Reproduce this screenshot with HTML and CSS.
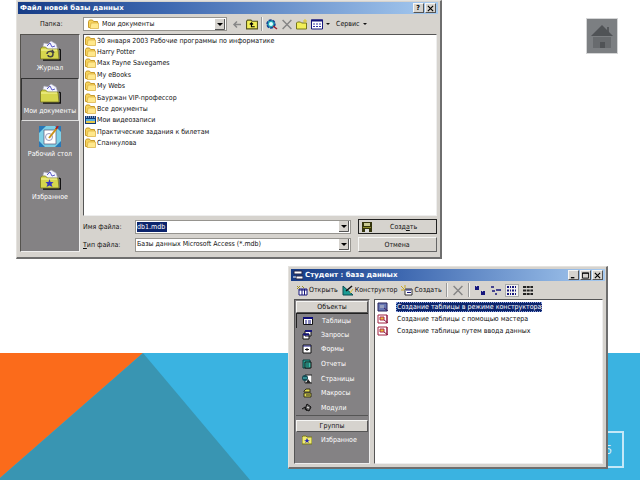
FILE: index.html
```
<!DOCTYPE html>
<html lang="ru">
<head>
<meta charset="utf-8">
<title>Файл новой базы данных</title>
<link rel="stylesheet" href="styles.css">
</head>
<body>
<svg class="defs" aria-hidden="true">
  <symbol id="folder" viewBox="0 0 11 10">
    <path d="M.5 8.500V2.500L1.500 1h3l1 1.500h4v6z" fill="#f7d45c" stroke="#c79a2c"/>
    <path d="M2 9.500 3 4h7.500v5.500z" fill="#ffe88c" stroke="#d9ac3c" stroke-width=".7"/>
  </symbol>
  <symbol id="bigfolder" viewBox="0 0 22 21">
    <path d="M3 9 5 3l4 1 3-3 5 3 2 6z" fill="#f4f5ff" stroke="#aab" stroke-width=".6"/>
    <path d="M8 6l3-3 2 4 3-1" fill="none" stroke="#5a5ac8"/>
    <path d="M20 9l1.500 1v10H4" fill="none" stroke="#111" stroke-width="1.500"/>
    <path d="M1.500 19V8.500l2-1.500h3l2 2h10.500l1 10z" fill="#d6d64e" stroke="#77771c" stroke-width=".8"/>
    <path d="M2 10h16" stroke="#f8f8a0"/>
  </symbol>
  <symbol id="form" viewBox="0 0 10 10">
    <path d="M.5 1.500h9v7h-9z" fill="#fff" stroke="#111"/>
    <path d="M0 1h10v2H0z" fill="#10107c"/>
    <path d="M2 5h2M5 5h3M2 7h2M5 7h3" stroke="#10107c"/>
  </symbol>
  <symbol id="wizard" viewBox="0 0 12 10">
    <path d="M1 1h9v8H1z" fill="#fff" stroke="#a02040"/>
    <path d="M3 3h4v3H3z" fill="#e6c23c" stroke="#b02848"/>
    <path d="M7 6l4 3M10 1v8" stroke="#8c1840"/>
  </symbol>
  <symbol id="cross" viewBox="0 0 10 10">
    <path d="M1 1l8 8M9 1 1 9" stroke="#858585" stroke-width="1.300"/>
  </symbol>
</svg>

<main class="slide">
  <svg class="band" viewBox="0 0 640 127" preserveAspectRatio="none" aria-hidden="true">
    <path d="M0 0h640v127H0z" fill="#3ab3e1"/>
    <path d="M0 0h143L0 125z" fill="#fb6b1b"/>
    <path d="M143 0 250 127H0v-2z" fill="#3995b2"/>
  </svg>
  <div class="page-number">5</div>
  <a class="home" href="#" aria-label="Домой">
    <svg viewBox="0 0 30 34"><path d="M20 8h2v6h-2z" fill="#56595c"/><path d="M15 6 4 17h22z" fill="#505356"/><path d="M6 18h18v11H6z" fill="#686b6e"/><path d="M13 23h5v6h-5z" fill="#505356"/></svg>
  </a>

  <form class="window file-dialog">
    <header class="titlebar">
      <h1>Файл новой базы данных</h1>
      <button type="button" class="caption" aria-label="Справка">?</button>
      <button type="button" class="caption" aria-label="Закрыть"><svg viewBox="0 0 8 8"><path d="M1 1l6 6M7 1 1 7" stroke="#000" stroke-width="1.300"/></svg></button>
    </header>

    <div class="lookup">
      <label for="place">Папка:</label>
      <div class="combo">
        <svg class="file-icon"><use href="#folder"/></svg>
        <select id="place"><option>Мои документы</option></select>
      </div>
      <div class="tools">
        <button type="button" aria-label="Назад"><svg viewBox="0 0 12 11"><path d="M10 5.500H3M6 2.500l-3 3 3 3" fill="none" stroke="#888" stroke-width="1.500"/></svg></button>
        <button type="button" aria-label="Вверх"><svg viewBox="0 0 11 10"><path d="M.5 9V2l1-1h3l1 1h5v7z" fill="#f2ef58" stroke="#55551a"/><path d="M8 7H5V3.500M3.500 5 5 3.500 6.500 5" fill="none" stroke="#000"/></svg></button>
        <span class="divider"></span>
        <button type="button" aria-label="Поиск в Интернете"><svg viewBox="0 0 12 11"><circle cx="5" cy="5" r="4" fill="#24a8b8" stroke="#173e92" stroke-width="1.500" stroke-dasharray="3 1"/><circle cx="5" cy="5" r="2" fill="#dff"/><path d="M7 7l4 3" stroke="#a02030" stroke-width="1.500"/></svg></button>
        <button type="button" aria-label="Удалить"><svg><use href="#cross"/></svg></button>
        <button type="button" aria-label="Создать папку"><svg viewBox="0 0 12 11"><path d="M.5 10V4l1-1h3l1 1h5v6z" fill="#f2ef58" stroke="#77771c"/><path d="M9 0v4M7 2h4" stroke="#dcc728"/></svg></button>
        <button type="button" class="with-arrow" aria-label="Вид"><svg viewBox="0 0 12 10"><path d="M.5.500h11v9H.500z" fill="#fff" stroke="#16167c"/><path d="M0 1h12" stroke="#16167c" stroke-width="2"/><path d="M2 4.500h8M2 7h8" stroke="#3434a4" stroke-dasharray="2 1"/></svg></button>
        <button type="button" class="with-arrow service">Сервис</button>
      </div>
    </div>

    <div class="dialog-body">
      <nav class="places">
        <button type="button"><svg><use href="#bigfolder"/><path d="M8 14c0-3 6-4 6 0s-5 3-5 1M13 10l2 3" fill="none" stroke="#444" stroke-width="1.500"/></svg>Журнал</button>
        <button type="button" class="current"><svg><use href="#bigfolder"/></svg>Мои документы</button>
        <button type="button"><svg viewBox="0 0 22 21"><path d="M0 0h22v21H0z" fill="#2878b8"/><path d="M0 7 7 0h9l6 6v9l-6 6H6l-6-6z" fill="#7fd0e6"/><path d="M5 4h12v14H5z" fill="#fff" stroke="#557" stroke-width=".7"/><circle cx="10" cy="11" r="3.500" fill="none" stroke="#99b"/><path d="M10 12l8-10" stroke="#c89018" stroke-width="2"/><path d="M17 3l2-3" stroke="#b02020" stroke-width="2"/></svg>Рабочий стол</button>
        <button type="button"><svg><use href="#bigfolder"/><path d="M10.500 10l1 3h3l-2 2 1 3-3-1.500-3 1.500 1-3-2-2h3z" fill="#3838bc"/></svg>Избранное</button>
      </nav>

      <div class="dialog-main">
        <ul class="files">
          <li><svg class="file-icon"><use href="#folder"/></svg>30 января 2003 Рабочие программы по информатике</li>
          <li><svg class="file-icon"><use href="#folder"/></svg>Harry Potter</li>
          <li><svg class="file-icon"><use href="#folder"/></svg>Max Payne Savegames</li>
          <li><svg class="file-icon"><use href="#folder"/></svg>My eBooks</li>
          <li><svg class="file-icon"><use href="#folder"/></svg>My Webs</li>
          <li><svg class="file-icon"><use href="#folder"/></svg>Бауржан VIP-профессор</li>
          <li><svg class="file-icon"><use href="#folder"/></svg>Все документы</li>
          <li><svg class="file-icon" viewBox="0 0 11 10"><path d="M0 1h11v8H0z" fill="#123a78"/><path d="M1 2h9" stroke="#fff" stroke-dasharray="1 1"/><path d="M1 4h9v2H1z" fill="#58aee0"/><path d="M1 6h9v2H1z" fill="#e5c84c"/></svg>Мои видеозаписи</li>
          <li><svg class="file-icon"><use href="#folder"/></svg>Практические задания к билетам</li>
          <li><svg class="file-icon"><use href="#folder"/></svg>Спанкулова</li>
        </ul>
        <div class="fields">
          <label for="fname">Имя файла:</label>
          <div class="combo">
            <input id="fname" type="text" value="db1.mdb">
            <button type="button" class="drop" aria-label="Список имён"></button>
          </div>
          <button type="submit" class="push default"><svg viewBox="0 0 10 10"><path d="M0 0h10v10H0z" fill="#34340c"/><path d="M2 1h6v3H2z" fill="#c8c890"/><path d="M1 5h8v1H1z" fill="#8c8c28"/><path d="M3 7h4v3H3z" fill="#ddd"/></svg><span>Созд<u>а</u>ть</span></button>
          <label for="ftype"><u>Т</u>ип файла:</label>
          <div class="combo">
            <select id="ftype"><option>Базы данных Microsoft Access (*.mdb)</option></select>
          </div>
          <button type="button" class="push"><span>Отмена</span></button>
        </div>
      </div>
    </div>
  </form>

  <section class="window database">
    <header class="titlebar">
      <svg class="title-icon" viewBox="0 0 10 10"><path d="M1 1h8v3H1zM3 6h7v3H3z" fill="#fff" stroke="#224"/><path d="M0 7h3" stroke="#fff"/></svg>
      <h2>Студент : база данных</h2>
      <button type="button" class="caption" aria-label="Свернуть"><svg viewBox="0 0 8 8"><path d="M1 6.500h4" stroke="#000" stroke-width="1.500"/></svg></button>
      <button type="button" class="caption" aria-label="Развернуть"><svg viewBox="0 0 8 8"><path d="M.5 1h7v6h-7z" fill="none" stroke="#000"/><path d="M0 1.500h8" stroke="#000"/></svg></button>
      <button type="button" class="caption" aria-label="Закрыть"><svg viewBox="0 0 8 8"><path d="M1 1l6 6M7 1 1 7" stroke="#000" stroke-width="1.300"/></svg></button>
    </header>
    <div class="db-tools">
      <button type="button"><svg viewBox="0 0 12 11"><path d="M3 4h8v6H3z" fill="#fff" stroke="#16167c"/><path d="M3 5h8M6 4v6M8.500 4v6" stroke="#16167c"/><path d="M1 1l3 3M1 4l3-3M6 1l2 2" stroke="#9a8a20"/></svg>Открыть</button>
      <button type="button"><svg viewBox="0 0 12 11"><path d="M1 1v9h10z" fill="#1c9c94" stroke="#0a4c50"/><path d="M4 6l6-5" stroke="#111" stroke-width="1.500"/><path d="M8 8l3-4" stroke="#d8c030"/></svg>Конструктор</button>
      <button type="button"><svg viewBox="0 0 12 11"><path d="M4 4h7v6H4z" fill="#fff" stroke="#333"/><path d="M5 5h5M6 7.500h4" stroke="#16167c"/><path d="M0 1l4 4M4 0v3M0 5h3" stroke="#c8a820"/></svg>Создать</button>
      <span class="divider"></span>
      <button type="button" aria-label="Удалить"><svg><use href="#cross"/></svg></button>
      <span class="divider"></span>
      <button type="button" aria-label="Крупные значки"><svg viewBox="0 0 12 11"><path d="M1 1h4v4H1zM7 6h4v4H7z" fill="#16167c"/><path d="M2 1h1M8 6h1" stroke="#fff"/></svg></button>
      <button type="button" aria-label="Мелкие значки"><svg viewBox="0 0 12 11"><path d="M1 2h3M2 6h3M6 5h5M5 9h2" stroke="#16167c" stroke-width="1.500"/></svg></button>
      <button type="button" class="pressed" aria-label="Список"><svg viewBox="0 0 12 11"><path d="M1 2h10M1 5.500h10M1 9h10" stroke="#16167c" stroke-width="2" stroke-dasharray="2 1 1 1"/></svg></button>
      <button type="button" aria-label="Таблица"><svg viewBox="0 0 12 11"><path d="M1 2h10M1 5.500h10M1 9h10" stroke="#222" stroke-width="2" stroke-dasharray="3 .7"/></svg></button>
    </div>
    <div class="db-body">
      <nav class="objects">
        <button type="button" class="group">Объекты</button>
        <ul>
          <li class="current"><button type="button"><svg><use href="#form"/></svg>Таблицы</button></li>
          <li><button type="button"><svg viewBox="0 0 10 10"><path d="M3 1h6v5H3zM1 4h6v5H1z" fill="#fff" stroke="#111"/><path d="M3 1h7M1 4.500h6" stroke="#16167c" stroke-width="2"/></svg>Запросы</button></li>
          <li><button type="button"><svg viewBox="0 0 10 10"><path d="M1 1h8v8H1z" fill="#fff" stroke="#111"/><path d="M1 2h8" stroke="#16167c"/><path d="M3 5.500h4M5 4v3" stroke="#111"/></svg>Формы</button></li>
          <li><button type="button"><svg viewBox="0 0 10 10"><path d="M1 1h7v8H1z" fill="#28a898" stroke="#083c3c"/><path d="M3 3h6v6H3z" fill="#42bca8" stroke="#111"/><path d="M4 5h3M4 7h3" stroke="#044"/></svg>Отчеты</button></li>
          <li><button type="button"><svg viewBox="0 0 10 10"><path d="M3 1h7v8H3z" fill="#fff" stroke="#222"/><circle cx="3" cy="4" r="3" fill="#164c54"/><path d="M1 4h4" stroke="#5cc"/><path d="M4 9l2-4 3 4z" fill="#222"/></svg>Страницы</button></li>
          <li><button type="button"><svg viewBox="0 0 10 10"><path d="M2 3l2-2h4v3H2zM2 5h7v4H2z" fill="#e2dc52" stroke="#333018"/><path d="M4 7h4" stroke="#222"/></svg>Макросы</button></li>
          <li><button type="button"><svg viewBox="0 0 10 10"><path d="M5 1l4 3-2 4-4-2zM0 6l3-2 2 4" fill="#666" stroke="#111"/><path d="M5 4l2 1" stroke="#eee"/></svg>Модули</button></li>
        </ul>
        <button type="button" class="group">Группы</button>
        <ul>
          <li><button type="button"><svg viewBox="0 0 10 10"><path d="M0 9V2l1-1h3l1 1h5v7z" fill="#f0ec70" stroke="#77771c"/><path d="M5 3l1 2h2L6 6l1 2-2-1-2 1 1-2-2-1h2z" fill="#2828b0"/></svg>Избранное</button></li>
        </ul>
      </nav>
      <ul class="tables">
        <li class="selected"><svg viewBox="0 0 12 10"><path d="M1 1h9v8H1z" fill="#6878b4" stroke="#26225c"/><path d="M3 3h4v3H3z" fill="#98a0c0"/><path d="M7 6l4 3" stroke="#402060"/></svg><span>Создание таблицы в режиме конструктора</span></li>
        <li><svg><use href="#wizard"/></svg><span>Создание таблицы с помощью мастера</span></li>
        <li><svg><use href="#wizard"/></svg><span>Создание таблицы путем ввода данных</span></li>
      </ul>
    </div>
  </section>
</main>
</body>
</html>
```
FILE: styles.css
```
* { box-sizing: border-box; }

body {
  margin: 0;
  background: #fff;
  color: #111;
  font: 7px/10px "DejaVu Sans Condensed", "DejaVu Sans", sans-serif;
}

button, input, select {
  margin: 0;
  padding: 0;
  border: 0;
  border-radius: 0;
  background: none;
  color: inherit;
  font: inherit;
}

ul { margin: 0; padding: 0; list-style: none; }
svg { display: block; flex: none; }
.defs { position: absolute; width: 0; height: 0; }

.slide { position: relative; min-height: 100vh; overflow: hidden; }

.band { position: absolute; left: 0; bottom: 0; width: 100%; height: 127px; }

.page-number {
  position: absolute;
  right: 16px;
  bottom: 12px;
  width: 48px;
  height: 37px;
  padding-right: 10px;
  border: 2px solid #c4e8f7;
  color: #d4f0fa;
  font: 13px/33px "Open Sans", sans-serif;
  text-align: right;
}

.home {
  position: absolute;
  top: 18px;
  right: 22px;
  width: 32px;
  height: 36px;
  border: 1px solid #d4d5d6;
  background: #7c7f82;
}

/* Windows */
.window {
  position: absolute;
  display: flex;
  flex-direction: column;
  border: 1px solid #e4e2de;
  border-right: 2px solid #6e6e6e;
  border-bottom: 2px solid #6e6e6e;
  background: #d6d3ce;
}

.titlebar {
  display: flex;
  align-items: center;
  height: 12px;
  padding: 0 2px;
  background: linear-gradient(90deg, #173c86, #3e68b0 35%, #a6caf0);
  color: #fff;
}

.titlebar h1, .titlebar h2 {
  flex: 1;
  margin: 0;
  font: bold 7px/12px "DejaVu Sans", sans-serif;
  white-space: nowrap;
}

.title-icon { width: 10px; height: 10px; margin-right: 2px; }

.caption {
  display: grid;
  place-items: center;
  width: 11px;
  height: 10px;
  border: 1px solid #f6f6f4;
  border-right-color: #555;
  border-bottom-color: #555;
  background: #d6d3ce;
  color: #000;
  font-weight: bold;
  line-height: 8px;
}
.caption + .caption { margin-left: 1px; }
.caption svg { width: 7px; height: 7px; }

.divider {
  width: 2px;
  height: 14px;
  border-left: 1px solid #999;
  border-right: 1px solid #f4f4f2;
}

.file-icon { width: 11px; height: 10px; }

.combo {
  display: flex;
  align-items: center;
  min-width: 0;
  height: 14px;
  padding: 1px;
  border: 1px solid #555;
  border-right-color: #eee;
  border-bottom-color: #eee;
  outline: 1px solid #96948f;
  outline-offset: -1px;
  background: #fff;
}

.drop, .combo select {
  appearance: none;
  background: #fff url("data:image/svg+xml,%3Csvg xmlns='http://www.w3.org/2000/svg' viewBox='0 0 10 11'%3E%3Cpath d='M0 0h10v11H0z' fill='%23d6d3ce'/%3E%3Cpath d='M9.500 0v10.500H0' fill='none' stroke='%23555'/%3E%3Cpath d='M2 4h6L5 7z'/%3E%3C/svg%3E") right center / 10px 11px no-repeat;
}
.combo select { flex: 1; min-width: 0; height: 11px; line-height: 11px; }
.drop { width: 10px; height: 11px; margin-left: auto; }
.combo input { width: 30px; height: 10px; background: #0c246c; color: #fff; }

/* File dialog */
.file-dialog {
  top: 0;
  left: 16px;
  width: 66.5%;
  padding: 1px 2px 5px 1px;
}

.lookup { display: flex; align-items: center; height: 20px; padding: 0 3px 0 22px; }
.lookup label { width: 43px; }
.lookup .combo { flex: 0 1 144px; padding-left: 4px; }
.lookup select { padding-left: 3px; }

.tools { display: flex; align-items: center; gap: 3px; margin-left: 4px; }
.tools button { display: flex; align-items: center; }
.tools svg { width: 12px; height: 11px; }
.tools .service { margin-left: 3px; }
.with-arrow::after {
  content: "";
  margin-left: 3px;
  border: 2px solid transparent;
  border-top-color: #111;
  border-bottom: 0;
}

.dialog-body { display: flex; gap: 3px; padding: 0 1px 0 2px; }

.places {
  flex: none;
  width: 60px;
  min-height: 217px;
  border: 1px solid #55534f;
  border-right-color: #eee;
  border-bottom-color: #eee;
  background: #848284;
}
.places button {
  display: flex;
  flex-direction: column;
  align-items: center;
  justify-content: center;
  gap: 2px;
  width: 100%;
  height: 43px;
  color: #fff;
  white-space: nowrap;
}
.places .current {
  border: 1px solid #333;
  border-right-color: #ddd;
  border-bottom-color: #ddd;
}
.places svg { width: 22px; height: 21px; }

.dialog-main { display: flex; flex: 1; flex-direction: column; gap: 3px; min-width: 0; }

.files {
  display: grid;
  grid-template-rows: repeat(10, 1fr);
  height: 182px;
  padding: 0 1px 66px;
  border: 1px solid #555;
  border-right-color: #eee;
  border-bottom-color: #eee;
  background: #fff;
}
.files li { display: flex; align-items: center; gap: 1px; white-space: nowrap; }

.fields {
  display: grid;
  grid-template-columns: 49px 1fr 79px;
  align-items: center;
  gap: 3px;
}
.fields .combo { margin-right: 4px; }

.push {
  display: flex;
  align-items: center;
  justify-content: center;
  height: 15px;
  border: 1px solid #f6f6f4;
  border-right-color: #666;
  border-bottom-color: #666;
  background: #d6d3ce;
}
.default { padding-left: 3px; border-color: #222; }
.push svg { width: 10px; height: 10px; }
.push span { flex: 1; text-align: center; }

/* Database window */
.database {
  right: 32px;
  bottom: 11px;
  width: 50%;
  padding: 2px 1px 3px 2px;
}

.db-tools { display: flex; align-items: center; gap: 4px; height: 18px; padding-left: 5px; }
.db-tools button { display: flex; align-items: center; gap: 1px; }
.db-tools svg { width: 12px; height: 11px; }
.db-tools .pressed { background: #f2f1ef; outline: 1px solid #aaa; }

.db-body { display: flex; gap: 4px; padding: 0 2px 0 3px; }

.objects {
  flex: none;
  width: 76px;
  min-height: 165px;
  padding: 1px;
  border: 1px solid #555;
  border-right-color: #eee;
  border-bottom-color: #eee;
  background: #848284;
}
.group {
  display: block;
  width: 100%;
  height: 12px;
  border: 1px solid #f6f6f4;
  border-right-color: #555;
  border-bottom-color: #555;
  background: #d6d3ce;
}
.objects ul { display: grid; grid-auto-rows: 1fr; }
.objects ul:first-of-type { height: 103px; margin-bottom: 4px; border-bottom: 1px solid #555; }
.objects ul:last-of-type { height: 15px; }
.objects li { display: flex; }
.objects li button { display: flex; flex: 1; align-items: center; gap: 9px; padding-left: 6px; color: #fff; }
.objects .current { border-left: 1px solid #222; border-top: 1px solid #222; }
.objects li svg { width: 10px; height: 10px; }

.tables {
  flex: 1;
  min-width: 0;
  padding: 1px 2px;
  border: 1px solid #555;
  border-right-color: #eee;
  border-bottom-color: #eee;
  background: #fff;
}
.tables li { display: flex; align-items: center; gap: 7px; height: 12px; white-space: nowrap; }
.tables svg { width: 12px; height: 10px; }
.tables span { padding: 0 1px; }
.tables .selected span { background: #0c246c; color: #fff; outline: 1px dotted #8ca0dc; outline-offset: -1px; }
```
